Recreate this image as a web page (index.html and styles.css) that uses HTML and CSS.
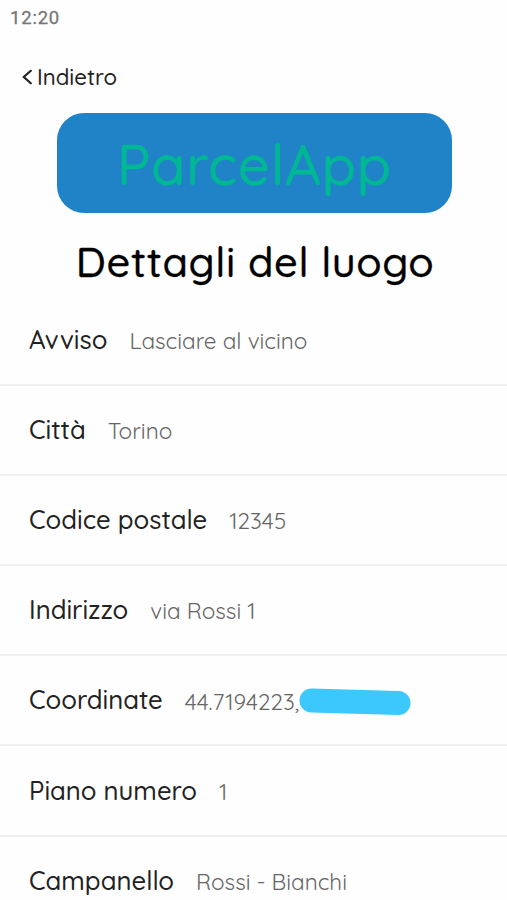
FILE: index.html
```
<!DOCTYPE html>
<html lang="it">

<head>
	<meta charset="utf-8">
	<title>ParcelApp</title>
	<link rel="stylesheet" href="styles.css">
</head>

<body>
	<div class="status">12:20</div>
	<a class="back">
		<svg class="back-icon" width="10" height="16" viewBox="0 0 10 16">
			<path d="M8.8 1.8 L1.8 8 L8.8 14.2" />
		</svg>
		<span>Indietro</span>
	</a>
	<div class="logo"><span class="logo-text">ParcelApp</span></div>
	<h1 class="title">Dettagli del luogo</h1>
	<div class="list">
		<div class="row"><span class="label">Avviso</span><span class="value">Lasciare al vicino</span></div>
		<div class="row"><span class="label">Città</span><span class="value">Torino</span></div>
		<div class="row"><span class="label">Codice postale</span><span class="value">12345</span></div>
		<div class="row"><span class="label">Indirizzo</span><span class="value">via Rossi 1</span></div>
		<div class="row"><span class="label">Coordinate</span><span class="value">44.7194223,</span>
			<svg class="marker" width="112" height="28" viewBox="0 0 112 28">
				<path d="M12.5 12.5 L99.5 15" />
			</svg>
		</div>
		<div class="row"><span class="label">Piano numero</span><span class="value">1</span></div>
		<div class="row"><span class="label">Campanello</span><span class="value">Rossi - Bianchi</span></div>
	</div>
</body>

</html>
```
FILE: styles.css
```
body {
	margin: 0;
	height: 900px;
	overflow: hidden;
	font-family: Quicksand, Lato, sans-serif;
	color: #222;
	background-color: #fefefe;
}

.status {
	height: 34px;
	padding-left: 10px;
	font: 400 18.5px/36px Roboto, sans-serif;
	letter-spacing: 0.8px;
	color: #777;
	-webkit-text-stroke: 0.3px #777;
}

.back {
	display: flex;
	align-items: center;
	height: 80px;
	padding: 5px 0 0 22px;
	margin-bottom: -2px;
	box-sizing: border-box;
	font-size: 22.2px;
	font-weight: 500;
}

.back-icon {
	margin-right: 5px;
	fill: none;
	stroke: #222;
	stroke-width: 2.2;
	stroke-linecap: round;
}

.logo {
	display: flex;
	justify-content: center;
	align-items: center;
	box-sizing: border-box;
	width: 395px;
	height: 100px;
	padding-top: 2px;
	margin: 1px 0 0 57px;
	border-radius: 27px;
	background-color: #2083c8;
}

.logo-text {
	font-size: 56px;
	font-weight: 500;
	letter-spacing: 0.7px;
	color: #00b894;
	-webkit-text-stroke: 0.3px #00b894;
}

.title {
	margin: 0;
	height: 82.5px;
	padding-left: 3px;
	line-height: 96px;
	text-align: center;
	font-size: 41.6px;
	font-weight: 500;
	letter-spacing: 0.6px;
	color: #000;
	-webkit-text-stroke: 0.3px #000;
}

.row {
	display: flex;
	align-items: center;
	box-sizing: border-box;
	height: 90.2px;
	padding-left: 29px;
	border-bottom: 2px solid #f0f0f0;
}

.label {
	margin-right: 22px;
	padding-bottom: 2px;
	font-size: 25.7px;
	font-weight: 500;
}

.value {
	padding-top: 1.6px;
	font-size: 22.5px;
	color: #666;
}

.marker {
	margin-top: 3px;
	fill: none;
	stroke: #3cc8fd;
	stroke-width: 24;
	stroke-linecap: round;
}
```
